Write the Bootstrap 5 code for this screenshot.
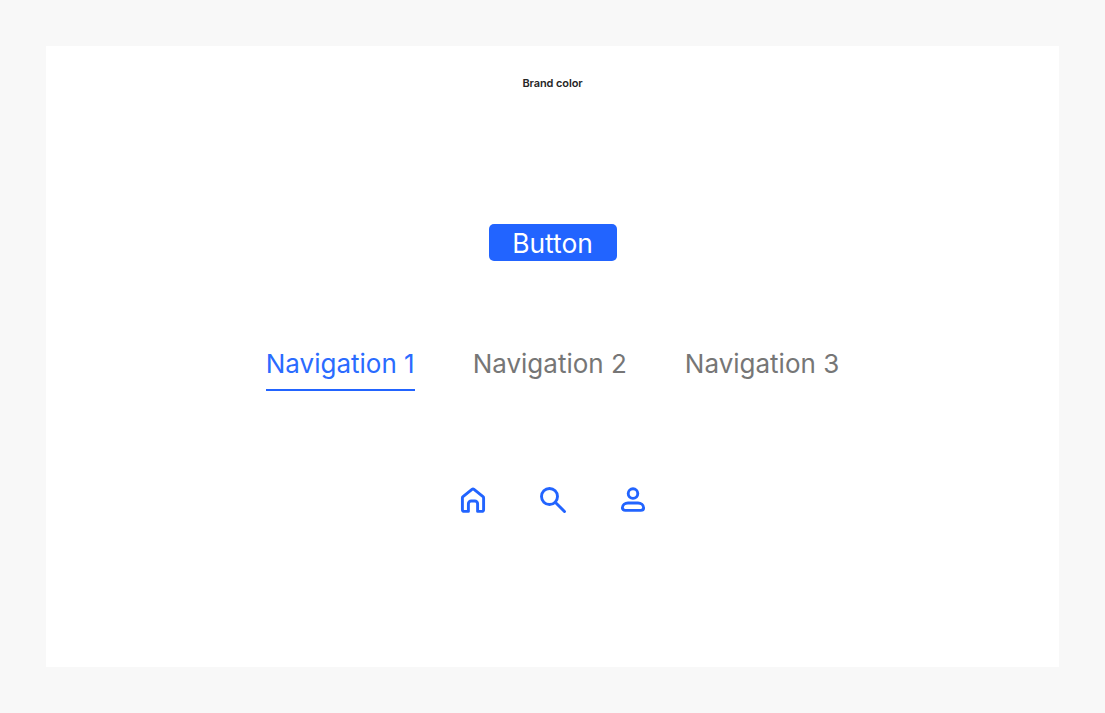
<!DOCTYPE html>
<html lang="en">
<head>
<meta charset="utf-8">
<title>Brand color</title>
<link href="https://cdn.jsdelivr.net/npm/bootstrap@5.3.0/dist/css/bootstrap.min.css" rel="stylesheet">
<style>
html, body { height: 100%; }
body { background: #f8f8f8; font-family: "Inter", sans-serif; padding: 46px; overflow: hidden; }
.sheet { background: #fff; height: 621px; padding-top: 29px; }
.sheet-title { font-size: 11px; line-height: 16px; font-weight: 600; color: #262626; margin: 0; letter-spacing: -.01em; }
.brand-btn { margin-top: 133px; width: 128px; height: 37px; padding: 0; font-size: 26.4px; line-height: 38px; font-weight: 400; color: #fff; background: #2264ff; border: 0; border-radius: 5px; }
.brand-btn:hover { background: #2264ff; color: #fff; }
.nav-strip { margin-top: 84px; gap: 58px; }
.nav-item-link { display: block; font-size: 26px; line-height: 38px; padding-bottom: 6px; font-weight: 400; color: #767676; text-decoration: none; border-bottom: 2px solid transparent; }
.nav-item-link.current { color: #2a6bff; border-bottom-color: #2264ff; }
.icon-strip { margin-top: 95px; gap: 52px; }
.icon-strip svg { display: block; width: 28px; height: 28px; fill: none; stroke: #2264ff; stroke-width: 2.9; stroke-linecap: round; stroke-linejoin: round; }
</style>
</head>
<body>
<main class="sheet d-flex flex-column align-items-center">
  <p class="sheet-title text-center">Brand color</p>
  <button type="button" class="btn brand-btn">Button</button>
  <nav class="nav-strip d-flex justify-content-center">
    <a class="nav-item-link current" href="#">Navigation 1</a>
    <a class="nav-item-link" href="#">Navigation 2</a>
    <a class="nav-item-link" href="#">Navigation 3</a>
  </nav>
  <div class="icon-strip d-flex justify-content-center">
    <svg viewBox="0 0 28 28" aria-label="Home"><path d="M4 10.6 13 3.4a1.6 1.6 0 0 1 2 0L24 10.6a1.8 1.8 0 0 1 .6 1.4V23.4a2 2 0 0 1-2 2H18.6V17.8a2.8 2.8 0 0 0-2.8-2.8h-3.6a2.8 2.8 0 0 0-2.8 2.8v7.6H5.4a2 2 0 0 1-2-2V12a1.8 1.8 0 0 1 .6-1.4Z"/></svg>
    <svg viewBox="0 0 28 28" aria-label="Search"><circle cx="10.5" cy="10.5" r="8"/><path d="M16.5 16.5 25.5 25.5"/></svg>
    <svg viewBox="0 0 28 28" aria-label="User"><circle cx="14" cy="7.6" r="4.8"/><path d="M9 17H19C22 17 24.6 19 24.6 21.8 24.6 23.4 23.4 24.4 21.8 24.4H6.2C4.6 24.4 3.4 23.4 3.4 21.8 3.4 19 6 17 9 17Z"/></svg>
  </div>
</main>
<script src="https://cdn.jsdelivr.net/npm/bootstrap@5.3.0/dist/js/bootstrap.bundle.min.js"></script>
</body>
</html>
